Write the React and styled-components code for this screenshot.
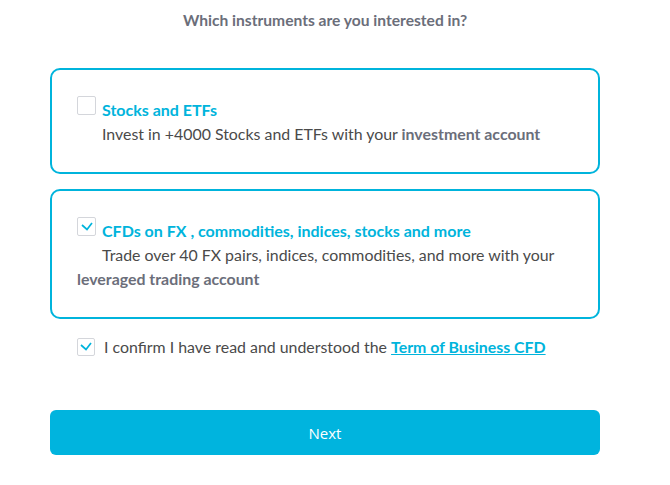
import styled, { createGlobalStyle } from "styled-components";

const GlobalStyle = createGlobalStyle`
  html, body {
    margin: 0;
    padding: 0;
    background: #ffffff;
  }
  body {
    font-family: "Lato", "Open Sans", sans-serif;
    -webkit-font-smoothing: antialiased;
  }
`;

const Page = styled.div`
  width: 550px;
  margin-left: 50px;
  padding-top: 9px;
`;

const Heading = styled.h2`
  margin: 0 0 37px;
  font-size: 15.6px;
  line-height: 22px;
  font-weight: 700;
  color: #6b6e7a;
  text-align: center;
`;

const Cards = styled.div`
  display: flex;
  flex-direction: column;
  gap: 15px;
`;

const Card = styled.label`
  display: block;
  border: 2px solid #00b4dc;
  border-radius: 10px;
  padding: 28px 25px 26px;
  cursor: pointer;
`;

const TitleRow = styled.div`
  display: flex;
  align-items: flex-start;
  gap: 6px;
`;

const Box = styled.span`
  flex: none;
  width: ${(p) => p.$size}px;
  height: ${(p) => p.$size}px;
  box-sizing: border-box;
  border: 1px solid #d4d6db;
  border-radius: 2px;
  margin-top: ${(p) => p.$offset}px;
  display: flex;
  align-items: center;
  justify-content: center;
  background: #fff;
`;

const Title = styled.span`
  font-size: 16px;
  line-height: 24px;
  font-weight: 700;
  color: #00b4dc;
`;

const Desc = styled.p`
  margin: 0;
  text-indent: 25px;
  font-size: 15.9px;
  line-height: 24px;
  color: #4a4a4a;

  b {
    font-weight: 700;
    color: #6b6e7a;
  }
`;

const ConfirmRow = styled.label`
  display: flex;
  align-items: center;
  gap: 9px;
  margin: 18px 0 0 27px;
  font-size: 15.9px;
  color: #4a4a4a;
  cursor: pointer;
`;

const Link = styled.a`
  color: #00b4dc;
  font-weight: 700;
  text-decoration: underline;
`;

const NextButton = styled.button`
  display: block;
  width: 100%;
  height: 45px;
  margin-top: 54px;
  border: none;
  border-radius: 6px;
  background: #00b4de;
  color: #ffffff;
  font-family: "Open Sans", sans-serif;
  font-size: 15px;
  cursor: pointer;
`;

const Check = () => (
  <svg width="12" height="9" viewBox="0 0 12 9" fill="none">
    <path d="M1 3 L6 7.5 L11 1" stroke="#00b4dc" strokeWidth="1.7" />
  </svg>
);

const Checkbox = ({ checked, size = 19, offset = -2 }) => (
  <Box $size={size} $offset={offset}>
    {checked && <Check />}
  </Box>
);

const App = () => {
  return (
    <>
      <GlobalStyle />
      <Page>
        <Heading>Which instruments are you interested in?</Heading>
        <Cards>
          <Card>
            <TitleRow>
              <Checkbox />
              <Title>Stocks and ETFs</Title>
            </TitleRow>
            <Desc>
              Invest in +4000 Stocks and ETFs with your <b>investment account</b>
            </Desc>
          </Card>
          <Card>
            <TitleRow>
              <Checkbox checked />
              <Title>CFDs on FX , commodities, indices, stocks and more</Title>
            </TitleRow>
            <Desc>
              Trade over 40 FX pairs, indices, commodities, and more with your{" "}
              <b>leveraged trading account</b>
            </Desc>
          </Card>
        </Cards>
        <ConfirmRow>
          <Checkbox checked size={18} offset={0} />
          <span>
            I confirm I have read and understood the{" "}
            <Link href="#">Term of Business CFD</Link>
          </span>
        </ConfirmRow>
        <NextButton>Next</NextButton>
      </Page>
    </>
  );
};

export default App;
